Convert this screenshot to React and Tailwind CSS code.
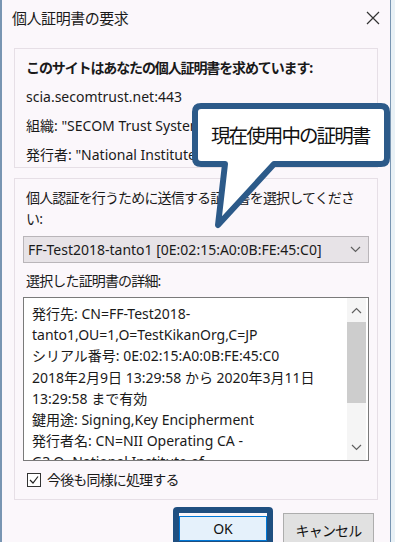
import React from "react";

const font = { fontFamily: '"Noto Sans", "Noto Sans CJK JP", sans-serif' };

const detailLines = [
  "発行先: CN=FF-Test2018-",
  "tanto1,OU=1,O=TestKikanOrg,C=JP",
  "シリアル番号: 0E:02:15:A0:0B:FE:45:C0",
  "2018年2月9日 13:29:58 から 2020年3月11日",
  "13:29:58 まで有効",
  "鍵用途: Signing,Key Encipherment",
  "発行者名: CN=NII Operating CA -",
  "G3,O=National Institute of",
];

const Chevron = ({ up, className }) => (
  <svg className={className} width="11" height="7" viewBox="0 0 11 7" fill="none">
    <path
      d={up ? "M1 6 L5.5 1.5 L10 6" : "M1 1 L5.5 5.5 L10 1"}
      stroke="#606060"
      strokeWidth="1.2"
    />
  </svg>
);

export default function App() {
  return (
    <div className="relative w-[395px] h-[542px] overflow-hidden bg-[#e9f1f6]" style={font}>
      <div className="w-[391px] h-[542px] bg-[#fbf7fb] border-l-2 border-r border-[#7895b2] flex flex-col text-[#1a1a1a]">
        {/* title bar */}
        <div className="h-[36px] shrink-0 flex items-center justify-between pl-[10px] pr-[10px]">
          <span className="text-[15px] tracking-[-0.03em]">個人証明書の要求</span>
          <svg width="14" height="14" viewBox="0 0 14 14">
            <path d="M1 1 L13 13 M13 1 L1 13" stroke="#333" strokeWidth="1.2" />
          </svg>
        </div>

        <div className="px-[12px] flex flex-col">
          {/* site info */}
          <div className="mt-[12px] h-[120px] border border-[#e6dfe6] pt-[4px] pl-[11px] overflow-hidden whitespace-nowrap text-[14px] leading-[29px]">
            <div className="font-bold tracking-[-0.08em]">このサイトはあなたの個人証明書を求めています:</div>
            <div>scia.secomtrust.net:443</div>
            <div>組織: "SECOM Trust Systems CO.,LTD."</div>
            <div>発行者: "National Institute of Informatics"</div>
          </div>

          {/* certificate select */}
          <div className="mt-[10px] h-[322px] border border-[#e6dfe6] pt-[8px] px-[8px] text-[14px] leading-[21px]">
            <div className="pl-[3px] tracking-[-0.06em]">
              <div>個人認証を行うために送信する証明書を選択してくださ</div>
              <div>い:</div>
            </div>
            <div className="mt-[7px] h-[27px] bg-[#e7e3e7] border border-[#b9b5b9] flex items-center justify-between pl-[4px] pr-[7px]">
              <span className="text-[14px]">FF-Test2018-tanto1 [0E:02:15:A0:0B:FE:45:C0]</span>
              <Chevron />
            </div>
            <div className="mt-[7px] pl-[3px] tracking-[-0.06em]">選択した証明書の詳細:</div>
            <div className="mt-[6px] h-[164px] bg-white border border-[#7a7a7a] flex overflow-hidden">
              <div className="flex-1 pl-[8px] pt-[5px] text-[14px] leading-[21.2px] whitespace-nowrap overflow-hidden">
                {detailLines.map((l) => (
                  <div key={l}>{l}</div>
                ))}
              </div>
              <div className="w-[19px] mr-[2px] flex flex-col items-center bg-[#f5f5f5]">
                <div className="h-[24px] flex items-center justify-center">
                  <Chevron up />
                </div>
                <div className="w-full h-[81px] bg-[#cdcdcd]" />
                <div className="flex-1" />
                <div className="h-[26px] flex items-center justify-center">
                  <Chevron />
                </div>
              </div>
            </div>
            <div className="mt-[8px] flex items-center gap-[6px] pl-[4px]">
              <div className="w-[14px] h-[14px] border border-[#333] bg-white flex items-center justify-center">
                <svg width="10" height="10" viewBox="0 0 10 10">
                  <path d="M1 5 L4 8 L9 1.5" stroke="#222" strokeWidth="1.2" fill="none" />
                </svg>
              </div>
              <span className="tracking-[-0.06em]">今後も同様に処理する</span>
            </div>
          </div>

          {/* buttons */}
          <div className="mt-[7px] flex justify-end gap-[10px] pr-[4px]">
            <div className="w-[100px] h-[40px] rounded-[4px] border-[6px] border-[#1f4f80] flex">
              <button className="flex-1 mt-[3px] bg-[#e5f1fb] border border-[#0078d7] text-[14px] text-[#111]">OK</button>
            </div>
            <button className="mt-[6px] w-[91px] h-[34px] bg-[#e1e1e1] border border-[#adadad] text-[14px] tracking-[-0.06em] text-[#111]">
              キャンセル
            </button>
          </div>
        </div>
      </div>

      {/* annotation callout */}
      <svg className="absolute left-0 top-0" width="395" height="542" viewBox="0 0 395 542">
        <path
          d="M201 106 H381 Q387 106 387 112 V158 Q387 164 381 164 H274 L218 225 L225 164 H201 Q195 164 195 158 V112 Q195 106 201 106 Z"
          fill="#ffffff"
          stroke="#2c5a89"
          strokeWidth="6"
          strokeLinejoin="round"
        />
      </svg>
      <div className="absolute left-[211px] top-[123px] text-[19.5px] leading-[26px] tracking-[-1.9px] text-[#111] whitespace-nowrap">
        現在使用中の証明書
      </div>
    </div>
  );
}
